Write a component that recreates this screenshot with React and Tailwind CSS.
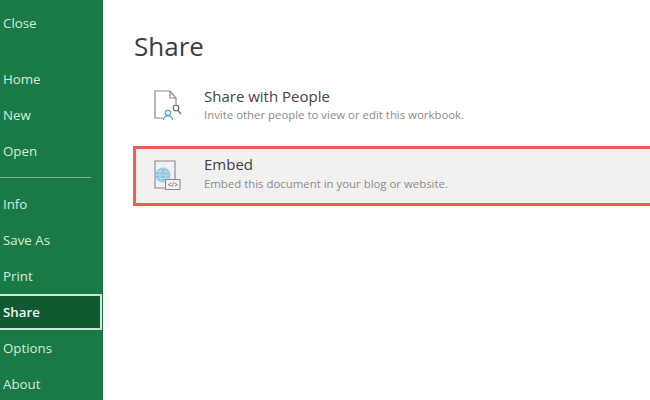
const topItems = ["Home", "New", "Open"];
const lowerItems = ["Info", "Save As", "Print"];
const bottomItems = ["Options", "About"];

function NavItem({ label }) {
    return <div className="flex h-9 items-center pl-[3px] pt-[2px] text-[13.300px] text-[#d5ecdc]">{label}</div>;
}

function ShareIcon() {
    return (
        <svg width="30" height="32" viewBox="0 0 30 32" fill="none">
            <path d="M9 29H1V2h15l6 7v6" stroke="#8a8a8a" strokeWidth="1.200" />
            <path d="M16 2v7h6" stroke="#8a8a8a" strokeWidth="1.200" />
            <circle cx="14" cy="24" r="2.600" stroke="#4aa6dc" strokeWidth="1.200" />
            <path d="M9.500 31c0-3 2-4 4.500-4s4.500 1 4.500 4" stroke="#4aa6dc" strokeWidth="1.200" />
            <circle cx="22" cy="19" r="2.800" stroke="#6d6d6d" strokeWidth="1.200" />
            <path d="M24 21.500l3 3.500" stroke="#6d6d6d" strokeWidth="1.200" />
        </svg>
    );
}

function EmbedIcon() {
    return (
        <svg width="30" height="32" viewBox="0 0 30 32" fill="none">
            <path d="M11 28H1V1h20v18" stroke="#7f878c" strokeWidth="1.100" />
            <circle cx="9" cy="15" r="7.500" fill="#8fc6e4" />
            <ellipse cx="9" cy="15" rx="3.200" ry="7.500" stroke="#cfe6f3" strokeWidth="0.600" />
            <path d="M1.500 15h15M2.500 11.500h13M2.500 18.500h13" stroke="#cfe6f3" strokeWidth="0.600" />
            <rect x="11.500" y="19.500" width="14.500" height="10" fill="#f2f1f0" stroke="#7f878c" />
            <text x="18.750" y="27" textAnchor="middle" fontSize="7" fill="#555" fontFamily="'Liberation Sans', sans-serif">&lt;/&gt;</text>
        </svg>
    );
}

export default function App() {
    return (
        <div className="flex h-[400px] w-[650px] overflow-hidden bg-white font-['Open_Sans',sans-serif]">
            <aside className="w-[103px] shrink-0 bg-[#1a7a45] pt-[5px]">
                <NavItem label="Close" />
                <div className="mt-5">
                    {topItems.map((item) => (
                        <NavItem key={item} label={item} />
                    ))}
                </div>
                <div className="my-2 h-px w-[91px] bg-[#7db896]" />
                {lowerItems.map((item) => (
                    <NavItem key={item} label={item} />
                ))}
                <div className="flex h-9 w-[102px] items-center border-y-2 border-r-2 border-[#cfe5d7] bg-[#0f5a30] pl-[3px] pt-[2px] text-[13.300px] font-semibold text-[#eef7f1]">
                    Share
                </div>
                {bottomItems.map((item) => (
                    <NavItem key={item} label={item} />
                ))}
            </aside>

            <main className="min-w-0 flex-1 pl-[31px] pt-[26px]">
                <h1 className="text-[26px] leading-10 text-[#3d3d3d]">Share</h1>

                <div className="mb-3 mt-[9px] flex h-[59px] items-center">
                    <div className="ml-5 w-[50px] shrink-0">
                        <ShareIcon />
                    </div>
                    <div>
                        <p className="text-[15px] leading-5 text-[#444]">Share with People</p>
                        <p className="mt-px text-[11.400px] leading-4 text-[#8a8a8a]">Invite other people to view or edit this workbook.</p>
                    </div>
                </div>

                <div className="-ml-px -mr-2 flex h-[60px] items-center border-[3px] border-[#e8604f] bg-[#f2f1f0]">
                    <div className="ml-[18px] w-[50px] shrink-0">
                        <EmbedIcon />
                    </div>
                    <div className="pb-[6px]">
                        <p className="text-[15px] leading-5 text-[#444]">Embed</p>
                        <p className="mt-0.5 text-[11.400px] leading-4 text-[#8a8a8a]">Embed this document in your blog or website.</p>
                    </div>
                </div>
            </main>
        </div>
    );
}
